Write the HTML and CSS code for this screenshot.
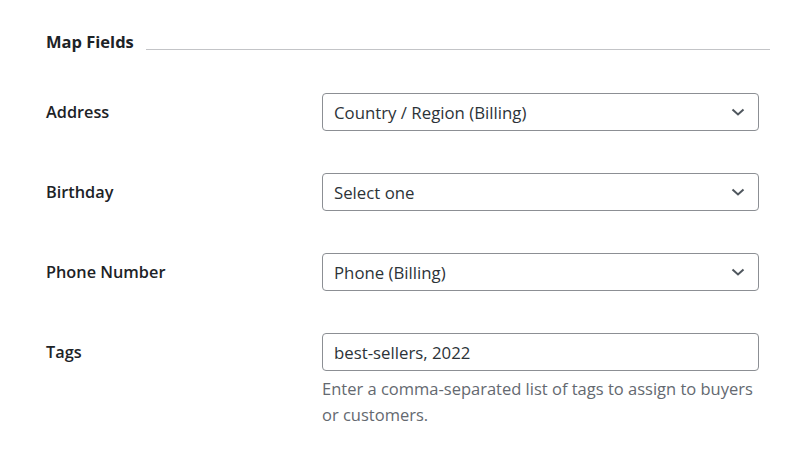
FILE: index.html
```html
<!DOCTYPE html>
<html>
<head>
<meta charset="utf-8">
<link rel="stylesheet" href="styles.css">
</head>
<body>
<div class="page">
  <div class="section-head">
    <h2 class="section-title">Map Fields</h2>
    <div class="section-rule"></div>
  </div>
  <div class="fields">
    <div class="row">
      <div class="label">Address</div>
      <div class="field">
        <div class="select"><span>Country / Region (Billing)</span>
          <svg class="chev" width="14" height="8" viewBox="0 0 14 8"><path d="M1.5 1.5 L7 6.5 L12.5 1.5" fill="none" stroke="#50575e" stroke-width="2"/></svg>
        </div>
      </div>
    </div>
    <div class="row">
      <div class="label">Birthday</div>
      <div class="field">
        <div class="select"><span>Select one</span>
          <svg class="chev" width="14" height="8" viewBox="0 0 14 8"><path d="M1.5 1.5 L7 6.5 L12.5 1.5" fill="none" stroke="#50575e" stroke-width="2"/></svg>
        </div>
      </div>
    </div>
    <div class="row">
      <div class="label">Phone Number</div>
      <div class="field">
        <div class="select"><span>Phone (Billing)</span>
          <svg class="chev" width="14" height="8" viewBox="0 0 14 8"><path d="M1.5 1.5 L7 6.5 L12.5 1.5" fill="none" stroke="#50575e" stroke-width="2"/></svg>
        </div>
      </div>
    </div>
    <div class="row row-top">
      <div class="label label-top">Tags</div>
      <div class="field">
        <div class="input">best-sellers, 2022</div>
        <p class="desc">Enter a comma-separated list of tags to assign to buyers or customers.</p>
      </div>
    </div>
  </div>
</div>
</body>
</html>
```

FILE: styles.css
```css
html, body {
  margin: 0;
  padding: 0;
  background: #ffffff;
}
body {
  font-family: "Open Sans", "Noto Sans", sans-serif;
  color: #1d2327;
  font-size: 16.5px;
}
.page {
  padding: 30px 24px 0 46px;
  width: 724px;
}
.section-head {
  display: flex;
  align-items: center;
  height: 24px;
}
.section-title {
  margin: 0;
  font-size: 16.5px;
  font-weight: 700;
  line-height: 24px;
  white-space: nowrap;
}
.section-rule {
  flex: 1;
  height: 1px;
  background: #c3c4c7;
  margin-left: 12px;
  margin-top: 14px;
}
.fields {
  display: flex;
  flex-direction: column;
  gap: 42px;
  margin-top: 39px;
}
.row {
  display: flex;
  align-items: center;
}
.row-top {
  align-items: flex-start;
}
.label {
  width: 276px;
  font-weight: 600;
  font-size: 16.3px;
}
.label-top {
  line-height: 38px;
}
.field {
  width: 437px;
}
.select, .input {
  box-sizing: border-box;
  height: 38px;
  border: 1px solid #8c8f94;
  border-radius: 4px;
  padding: 0 10px 0 11px;
  display: flex;
  align-items: center;
  justify-content: space-between;
  font-size: 16.8px;
  color: #2c3338;
}
.chev {
  display: block;
  margin-right: 3px;
}
.desc {
  margin: 5px 0 0 0;
  font-size: 16.5px;
  line-height: 26px;
  color: #646970;
}
```
